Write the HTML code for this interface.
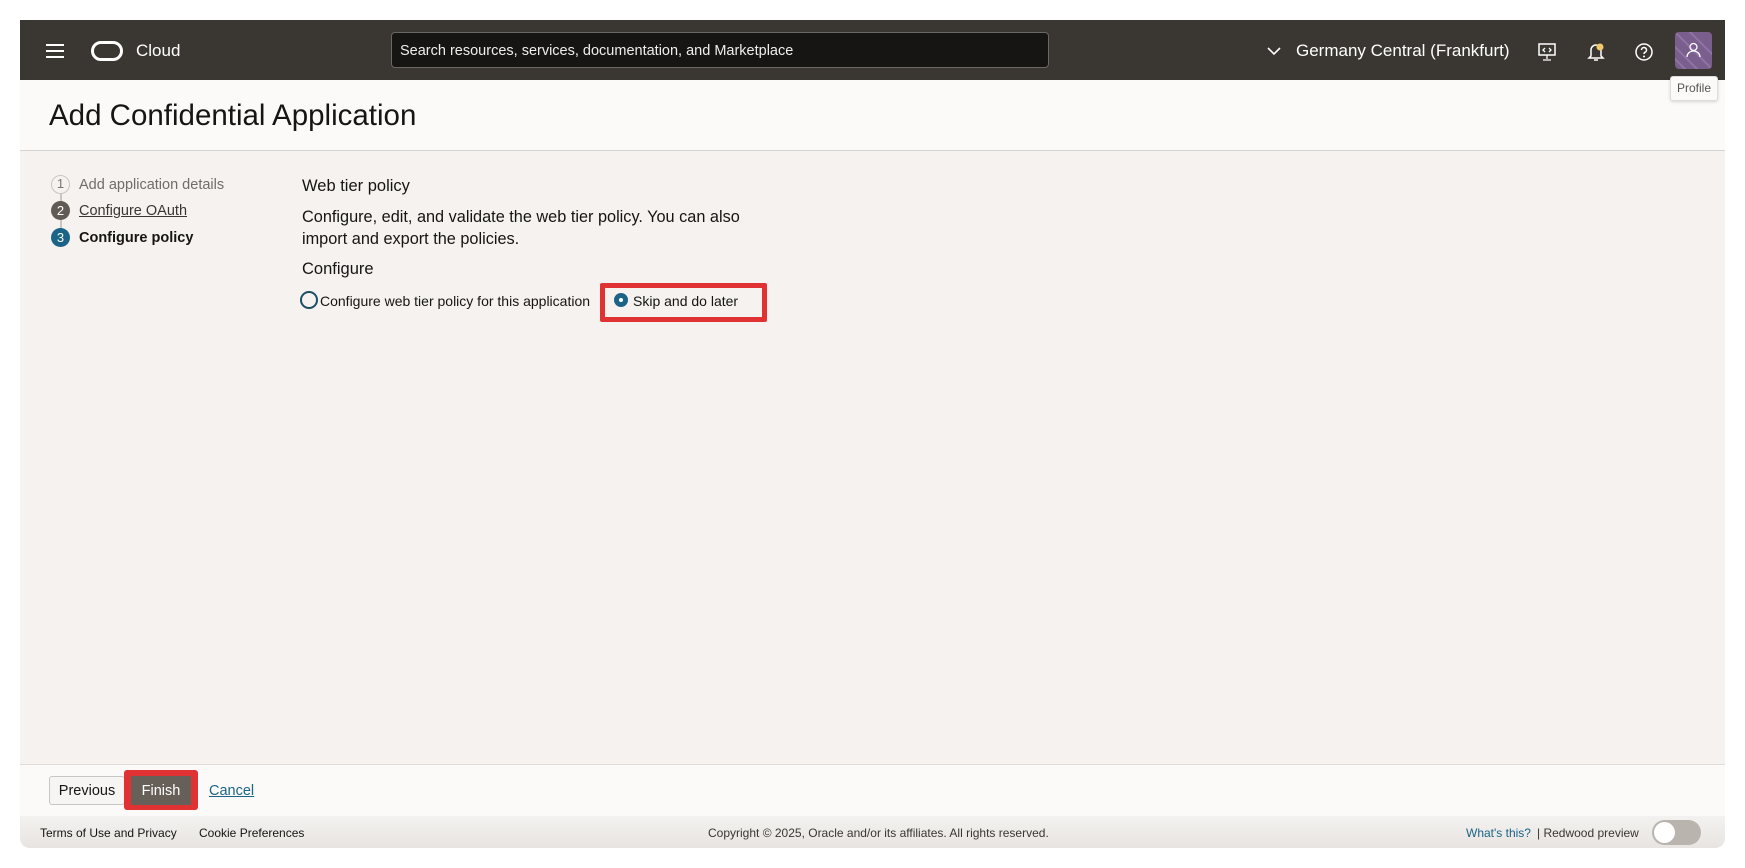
<!DOCTYPE html>
<html><head><meta charset="utf-8"><style>
*{box-sizing:border-box;margin:0;padding:0}
body{width:1745px;height:868px;background:#fff;font-family:"Liberation Sans",sans-serif;position:relative;overflow:hidden}
.abs{position:absolute}
#frame{left:20px;top:20px;width:1705px;height:828px;background:#f5f2ef;overflow:hidden;border-radius:0 0 10px 10px}
#hdr{left:0;top:0;width:1705px;height:60px;background:#3a3632}
#title{left:0;top:60px;width:1705px;height:71px;background:#fbfaf9;border-bottom:1px solid #d6d3d0}
.t{white-space:nowrap}
</style></head><body>
<div id="frame" class="abs">
 <div id="hdr" class="abs">
  <div class="abs" style="left:26px;top:24px;width:18px;height:2px;background:#fff;box-shadow:0 6px 0 #fff,0 12px 0 #fff"></div>
  <div class="abs" style="left:71px;top:21px;width:32px;height:20px;border:3px solid #fff;border-radius:10px"></div>
  <div class="abs t" style="left:116px;top:21px;color:#fff;font-size:17px">Cloud</div>
  <div class="abs" style="left:371px;top:12px;width:658px;height:36px;background:#161513;border:1px solid #6b6762;border-radius:4px"></div>
  <div class="abs t" style="left:380px;top:23px;color:#eee;font-size:14.5px">Search resources, services, documentation, and Marketplace</div>
  <svg class="abs" style="left:1246px;top:25px" width="16" height="12"><path d="M2 3 L8 9 L14 3" stroke="#fff" stroke-width="1.6" fill="none"/></svg>
  <div class="abs t" style="left:1276px;top:21px;color:#fff;font-size:17px">Germany Central (Frankfurt)</div>
  <svg class="abs" style="left:1517px;top:22px" width="20" height="20"><rect x="2" y="2" width="16" height="11" stroke="#fff" stroke-width="1.5" fill="none"/><path d="M10 13v4M6 18h8M8 6l-2 2 2 2M12 6l2 2-2 2" stroke="#fff" stroke-width="1.3" fill="none"/></svg>
  <svg class="abs" style="left:1566px;top:21px" width="20" height="22"><path d="M5 15V9a5 5 0 0 1 10 0v6l2 2H3z" stroke="#fff" stroke-width="1.5" fill="none"/><path d="M8 19h4" stroke="#fff" stroke-width="1.5"/><circle cx="14" cy="6" r="3.5" fill="#f1c96a"/></svg>
  <svg class="abs" style="left:1614px;top:22px" width="20" height="20"><circle cx="10" cy="10" r="8" stroke="#fff" stroke-width="1.5" fill="none"/><path d="M7.5 8a2.5 2.5 0 1 1 3.5 2.3c-.8.4-1 .9-1 1.7" stroke="#fff" stroke-width="1.5" fill="none"/><circle cx="10" cy="14.5" r="1" fill="#fff"/></svg>
  <div class="abs" style="left:1655px;top:12px;width:37px;height:37px;background:#7a5f8e;border-radius:4px;overflow:hidden">
   <svg width="37" height="37"><path d="M-5 10L30 45M0 0L40 40M10 -5L45 30M-5 22L20 47" stroke="#8f74a3" stroke-width="2"/><circle cx="18.5" cy="15" r="3.5" stroke="#fff" stroke-width="1.3" fill="none"/><path d="M12 25a6.5 6 0 0 1 13 0" stroke="#fff" stroke-width="1.3" fill="none"/></svg>
  </div>
 </div>
 <div id="title" class="abs">
  <div class="abs t" style="left:29px;top:19px;font-size:29.5px;color:#161513">Add Confidential Application</div>
 </div>
 <div class="abs" style="left:1650px;top:56px;width:48px;height:25px;background:#fbfaf9;border:1px solid #ddd;border-radius:3px;box-shadow:0 1px 3px rgba(0,0,0,.15);font-size:12px;color:#555;text-align:center;line-height:23px">Profile</div>

 <div class="abs" style="left:40px;top:173px;width:2px;height:45px;background:#c9c6c2"></div>
 <div class="abs" style="left:31px;top:155px;width:19px;height:19px;border-radius:50%;background:#f5f2ef;border:1.5px solid #c9c6c2;font-size:13px;color:#777;text-align:center;line-height:16px">1</div>
 <div class="abs t" style="left:59px;top:157px;font-size:14.5px;color:#6f6c69">Add application details</div>
 <div class="abs" style="left:31px;top:181px;width:19px;height:19px;border-radius:50%;background:#615b55;font-size:13px;color:#fff;text-align:center;line-height:19px">2</div>
 <div class="abs t" style="left:59px;top:183px;font-size:14.5px;color:#3a3632;text-decoration:underline">Configure OAuth</div>
 <div class="abs" style="left:31px;top:208px;width:19px;height:19px;border-radius:50%;background:#1b6488;font-size:13px;color:#fff;text-align:center;line-height:19px">3</div>
 <div class="abs t" style="left:59px;top:210px;font-size:14.5px;color:#161513;font-weight:bold">Configure policy</div>

 <div class="abs t" style="left:282px;top:157px;font-size:16.5px;color:#161513">Web tier policy</div>
 <div class="abs t" style="left:282px;top:186px;font-size:16.3px;color:#161513;line-height:22px">Configure, edit, and validate the web tier policy. You can also<br>import and export the policies.</div>
 <div class="abs t" style="left:282px;top:240px;font-size:16.5px;color:#161513">Configure</div>
 <div class="abs" style="left:280px;top:271px;width:18px;height:18px;border-radius:50%;border:2px solid #1b4f66"></div>
 <div class="abs t" style="left:300px;top:273px;font-size:14px;color:#161513">Configure web tier policy for this application</div>
 <div class="abs" style="left:580px;top:263px;width:167px;height:39px;border:5px solid #e03232;border-radius:2px"></div>
 <div class="abs" style="left:594px;top:273px;width:14px;height:14px;border-radius:50%;background:#1b6488"></div>
 <div class="abs" style="left:599px;top:278px;width:4px;height:4px;border-radius:50%;background:#fff"></div>
 <div class="abs t" style="left:613px;top:273px;font-size:14px;color:#161513">Skip and do later</div>

 <div class="abs" style="left:0;top:744px;width:1705px;height:52px;background:#fbfaf9;border-top:1px solid #e0dcd8"></div>
 <div class="abs" style="left:29px;top:756px;width:76px;height:29px;border:1px solid #c9c6c2;border-radius:3px;background:#f7f5f3;font-size:14.5px;text-align:center;line-height:28px;color:#161513">Previous</div>
 <div class="abs" style="left:104px;top:750px;width:74px;height:40px;background:#e03232;border-radius:3px"></div>
 <div class="abs" style="left:111px;top:756px;width:60px;height:29px;background:#676059;font-size:14.5px;text-align:center;line-height:30px;color:#fff">Finish</div>
 <div class="abs t" style="left:189px;top:763px;font-size:14.5px;color:#1b6488;text-decoration:underline">Cancel</div>

 <div class="abs" style="left:0;top:796px;width:1705px;height:32px;background:linear-gradient(#f4f2f0,#e7e4e1)"></div>
 <div class="abs t" style="left:20px;top:806px;font-size:12px;color:#161513">Terms of Use and Privacy</div>
 <div class="abs t" style="left:179px;top:806px;font-size:12px;color:#161513">Cookie Preferences</div>
 <div class="abs t" style="left:688px;top:806px;font-size:12px;color:#3a3632">Copyright © 2025, Oracle and/or its affiliates. All rights reserved.</div>
 <div class="abs t" style="left:1446px;top:806px;font-size:12px;color:#1b6488">What's this?</div>
 <div class="abs t" style="left:1517px;top:806px;font-size:12px;color:#3a3632">| Redwood preview</div>
 <div class="abs" style="left:1632px;top:800px;width:49px;height:25px;border-radius:13px;background:#b9b4ae"></div>
 <div class="abs" style="left:1634px;top:802px;width:21px;height:21px;border-radius:50%;background:#fff"></div>
</div>
</body></html>
